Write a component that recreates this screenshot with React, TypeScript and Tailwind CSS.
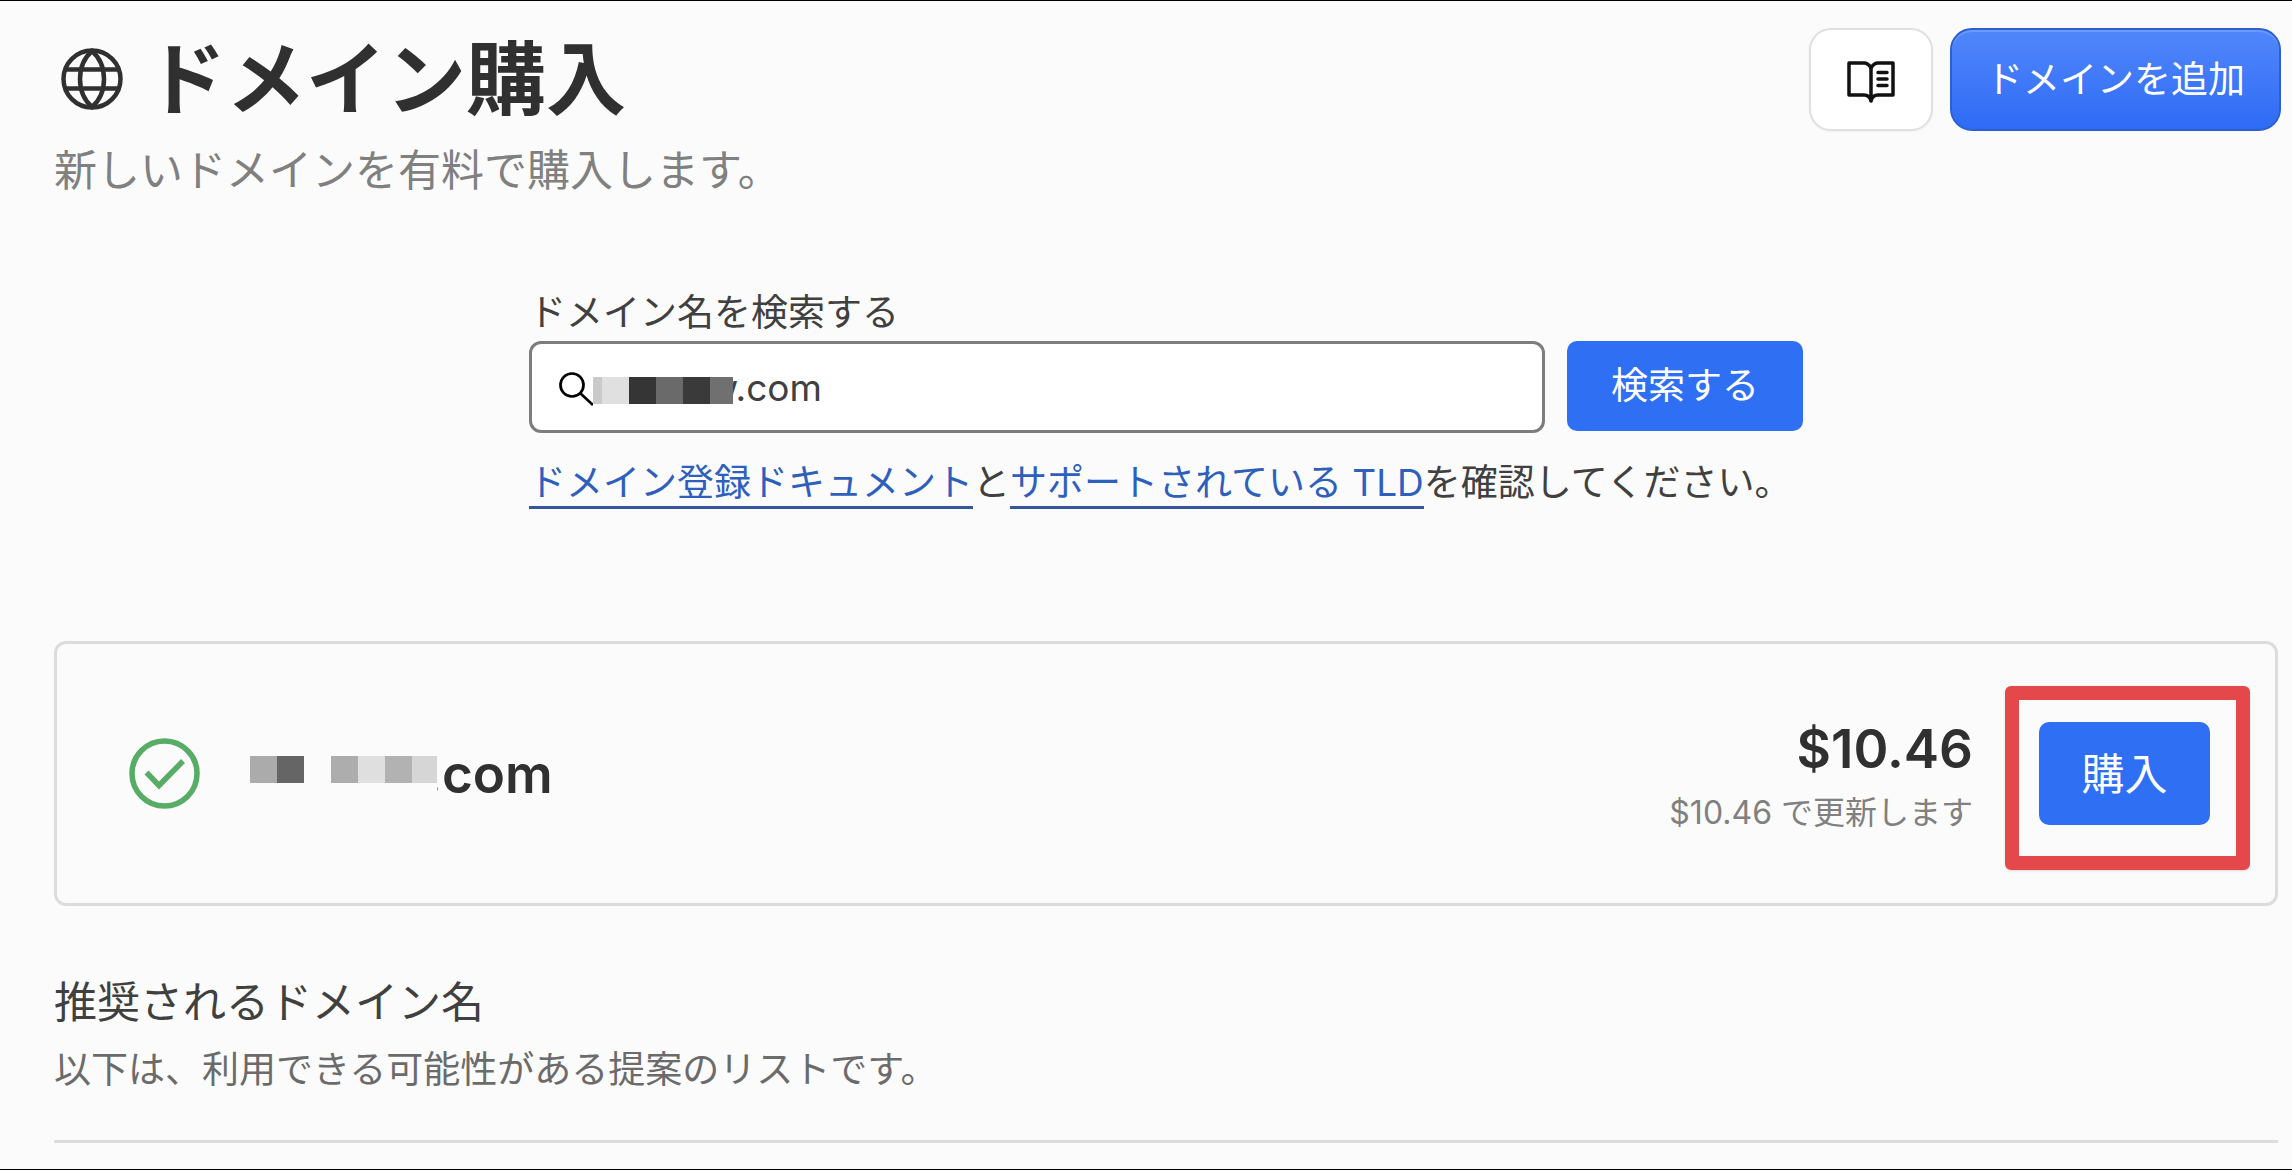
import React from 'react';

const emailBlocks = [
  { w: 'w-[9px]', c: 'bg-[#cacaca]' },
  { w: 'w-[27px]', c: 'bg-[#e0e0e0]' },
  { w: 'w-[27px]', c: 'bg-[#353535]' },
  { w: 'w-[27px]', c: 'bg-[#6a6a6a]' },
  { w: 'w-[27px]', c: 'bg-[#3a3a3a]' },
  { w: 'w-[23px]', c: 'bg-[#707070]' },
];

const nameBlocks = [
  { w: 'w-[27px]', c: 'bg-[#ababab]' },
  { w: 'w-[27px]', c: 'bg-[#656565]' },
  { w: 'w-[27px]', c: 'bg-transparent' },
  { w: 'w-[27px]', c: 'bg-[#adadad]' },
  { w: 'w-[27px]', c: 'bg-[#dfdfdf]' },
  { w: 'w-[27px]', c: 'bg-[#b2b2b2]' },
  { w: 'w-[25px]', c: 'bg-[#d6d6d6]' },
];

function Mosaic({ blocks }: { blocks: { w: string; c: string }[] }) {
  return (
    <span className="flex h-[27px]" aria-hidden="true">
      {blocks.map((b, i) => (
        <span key={i} className={`h-full ${b.w} ${b.c}`} />
      ))}
    </span>
  );
}

function GlobeIcon() {
  return (
    <svg className="size-16 shrink-0" viewBox="0 0 64 64" fill="none" stroke="#303030" strokeWidth="4.500" aria-hidden="true">
      <circle cx="32" cy="32" r="28.500" />
      <path d="M32 4C16 18 16 46 32 60C48 46 48 18 32 4Z" />
      <path d="M5 22.500h54M5 41.500h54" />
    </svg>
  );
}

function BookIcon() {
  return (
    <svg className="h-[42px] w-12" viewBox="0 0 48 42" fill="none" stroke="#111" strokeWidth="3.500" strokeLinejoin="round" aria-hidden="true">
      <path d="M24 7C22 3.500 20 2 17 2H2v32h15c3.500 0 6 1.500 7 6 1-4.500 3.500-6 7-6h15V2H31c-3 0-5 1.500-7 5Z" />
      <path d="M24 6v34" />
      <path d="M31 11.500h9M31 18h9M31 24.500h9" strokeLinecap="round" />
    </svg>
  );
}

function SearchIcon() {
  return (
    <svg className="size-9 shrink-0" viewBox="0 0 36 36" fill="none" stroke="#000" strokeWidth="2.700" aria-hidden="true">
      <circle cx="15" cy="13" r="11.500" />
      <path d="M23 21l13 12" />
    </svg>
  );
}

function CheckIcon() {
  return (
    <svg className="size-[71px] shrink-0" viewBox="0 0 71 71" fill="none" stroke="#57ac66" strokeWidth="5.500" aria-hidden="true">
      <circle cx="35.500" cy="35.500" r="32.500" />
      <path d="M17.500 34.500l12.500 13 24-24.500" />
    </svg>
  );
}

export default function App() {
  return (
    <main className="min-h-screen border-y border-black bg-[#fbfbfb] pr-[14px] pb-5 pl-[54px] font-['Inter','Noto_Sans_CJK_JP',sans-serif] text-[37px] leading-[56px] text-[#404040]">
      <header className="-mr-[3px] flex items-start justify-between pt-[27px]">
        <div>
          <div className="flex items-center gap-[22px] pl-[6px]">
            <GlobeIcon />
            <h1 className="text-[80px] leading-[102px] font-bold text-[#303030]">ドメイン購入</h1>
          </div>
          <p className="mt-3 text-[43px] leading-[56px] text-[#808080]">新しいドメインを有料で購入します。</p>
        </div>
        <div className="flex gap-[17px]">
          <button type="button" aria-label="ドキュメント" className="flex h-[103px] w-[124px] items-center justify-center rounded-[22px] border-2 border-[#e0e0e0] bg-white pt-1 shadow-xs">
            <BookIcon />
          </button>
          <button type="button" className="h-[103px] rounded-[22px] border-2 border-[#2c5fd2] bg-linear-to-b from-[#5186fb] to-[#2e6bf5] px-[34px] text-white inset-shadow-[0_2px_0_#6c9bff]">
            ドメインを追加
          </button>
        </div>
      </header>

      <section className="mx-auto mt-[87px] w-[1274px]">
        <label htmlFor="domain" className="block">ドメイン名を検索する</label>
        <div className="flex items-start gap-[22px]">
          <div className="relative flex h-[92px] flex-1 items-center rounded-xl border-3 border-[#7d7d7d] bg-white">
            <input id="domain" type="text" defaultValue="w.com" className="h-full w-full rounded-xl bg-transparent pl-[176px] outline-none" />
            <div className="pointer-events-none absolute inset-y-0 left-[25px] flex items-center pt-[6px]">
              <SearchIcon />
              <Mosaic blocks={emailBlocks} />
            </div>
          </div>
          <button type="button" className="h-[90px] rounded-[10px] bg-[#2f6ff4] px-[44px] text-white">検索する</button>
        </div>
        <p className="mt-[22px]">
          <a href="#docs" className="border-b-3 border-[#36579e] pb-px text-[#2f5fbd]">ドメイン登録ドキュメント</a>と
          <a href="#tld" className="border-b-3 border-[#36579e] pb-px text-[#2f5fbd]">サポートされている TLD</a>を確認してください。
        </p>
      </section>

      <section className="mt-[130px] flex h-[265px] items-center rounded-xl border-3 border-[#dcdcdc] pr-[65px] pl-[72px]">
        <CheckIcon />
        <h2 className="ml-[50px] flex items-center text-[53px] leading-[64px] font-semibold text-[#303030]">
          <span className="z-10 bg-[#fbfbfb] pt-2 pb-4">
            <Mosaic blocks={nameBlocks} />
          </span>
          <span className="-ml-3">.com</span>
        </h2>
        <div className="ml-auto pt-[6px] text-right">
          <p className="text-[53px] leading-[64px] font-semibold text-[#303030]">$10.46</p>
          <p className="mt-2 text-[32px] leading-[48px] text-[#808080]">$10.46 で更新します</p>
        </div>
        <div className="relative ml-[66px]">
          <button type="button" className="block h-[103px] w-[171px] rounded-[10px] bg-[#2f6ff4] text-[43px] text-white">購入</button>
          <span className="pointer-events-none absolute -top-9 -right-10 -bottom-[45px] -left-[34px] rounded-md border-14 border-[#e5484b] shadow-sm" />
        </div>
      </section>

      <section className="mt-[68px] border-b-3 border-[#dcdcdc] pb-[42px]">
        <h2 className="text-[43px] leading-[56px]">推奨されるドメイン名</h2>
        <p className="mt-3 text-[#6b6b6b]">以下は、利用できる可能性がある提案のリストです。</p>
      </section>
    </main>
  );
}
